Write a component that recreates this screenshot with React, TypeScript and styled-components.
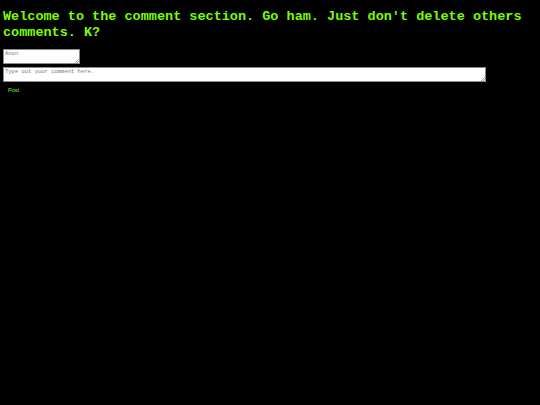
import styled, { createGlobalStyle } from "styled-components";

const Global = createGlobalStyle`
  html, body {
    margin: 0;
    background: #000;
  }
  body {
    padding: 9px 3px;
    font-family: "Liberation Mono", "Courier New", monospace;
  }
`;

const Page = styled.div`
  display: flex;
  flex-direction: column;
  align-items: flex-start;
`;

const Title = styled.h1`
  margin: 0 0 8px;
  color: #7cfc00;
  font-family: "Liberation Mono", "Courier New", monospace;
  font-size: 13.5px;
  line-height: 16px;
  font-weight: bold;
  width: 530px;
`;

/* drawn at double size and zoomed to half, like the original page */
const Field = styled.textarea<{ $w: number }>`
  zoom: 0.5;
  box-sizing: border-box;
  width: ${(p) => p.$w * 2}px;
  height: 30px;
  margin: 0 0 6px;
  padding: 2px 2px;
  border: 2px solid #8a8a8a;
  background: #fff;
  font-family: "Liberation Mono", "Courier New", monospace;
  font-size: 11px;
  line-height: 13px;
  resize: both;
  &::placeholder {
    color: #777;
  }
  &::-webkit-resizer {
    background:
      linear-gradient(135deg, transparent 40%, #aaa 40%, #aaa 55%, transparent 55%, transparent 70%, #aaa 70%, #aaa 85%, transparent 85%)
      right 1px bottom 1px / 8px 8px no-repeat;
  }
`;

const PostButton = styled.button`
  zoom: 0.5;
  margin: 0;
  padding: 4px 10px;
  background: #000;
  border: none;
  color: #7cfc00;
  font-family: "Liberation Sans", Arial, sans-serif;
  font-size: 11px;
  cursor: pointer;
`;

export default function App() {
  return (
    <Page>
      <Global />
      <Title>Welcome to the comment section. Go ham. Just don't delete others comments. K?</Title>
      <Field $w={77} placeholder="Anon" />
      <Field $w={483} placeholder="Type out your comment here." />
      <PostButton>Post</PostButton>
    </Page>
  );
}
